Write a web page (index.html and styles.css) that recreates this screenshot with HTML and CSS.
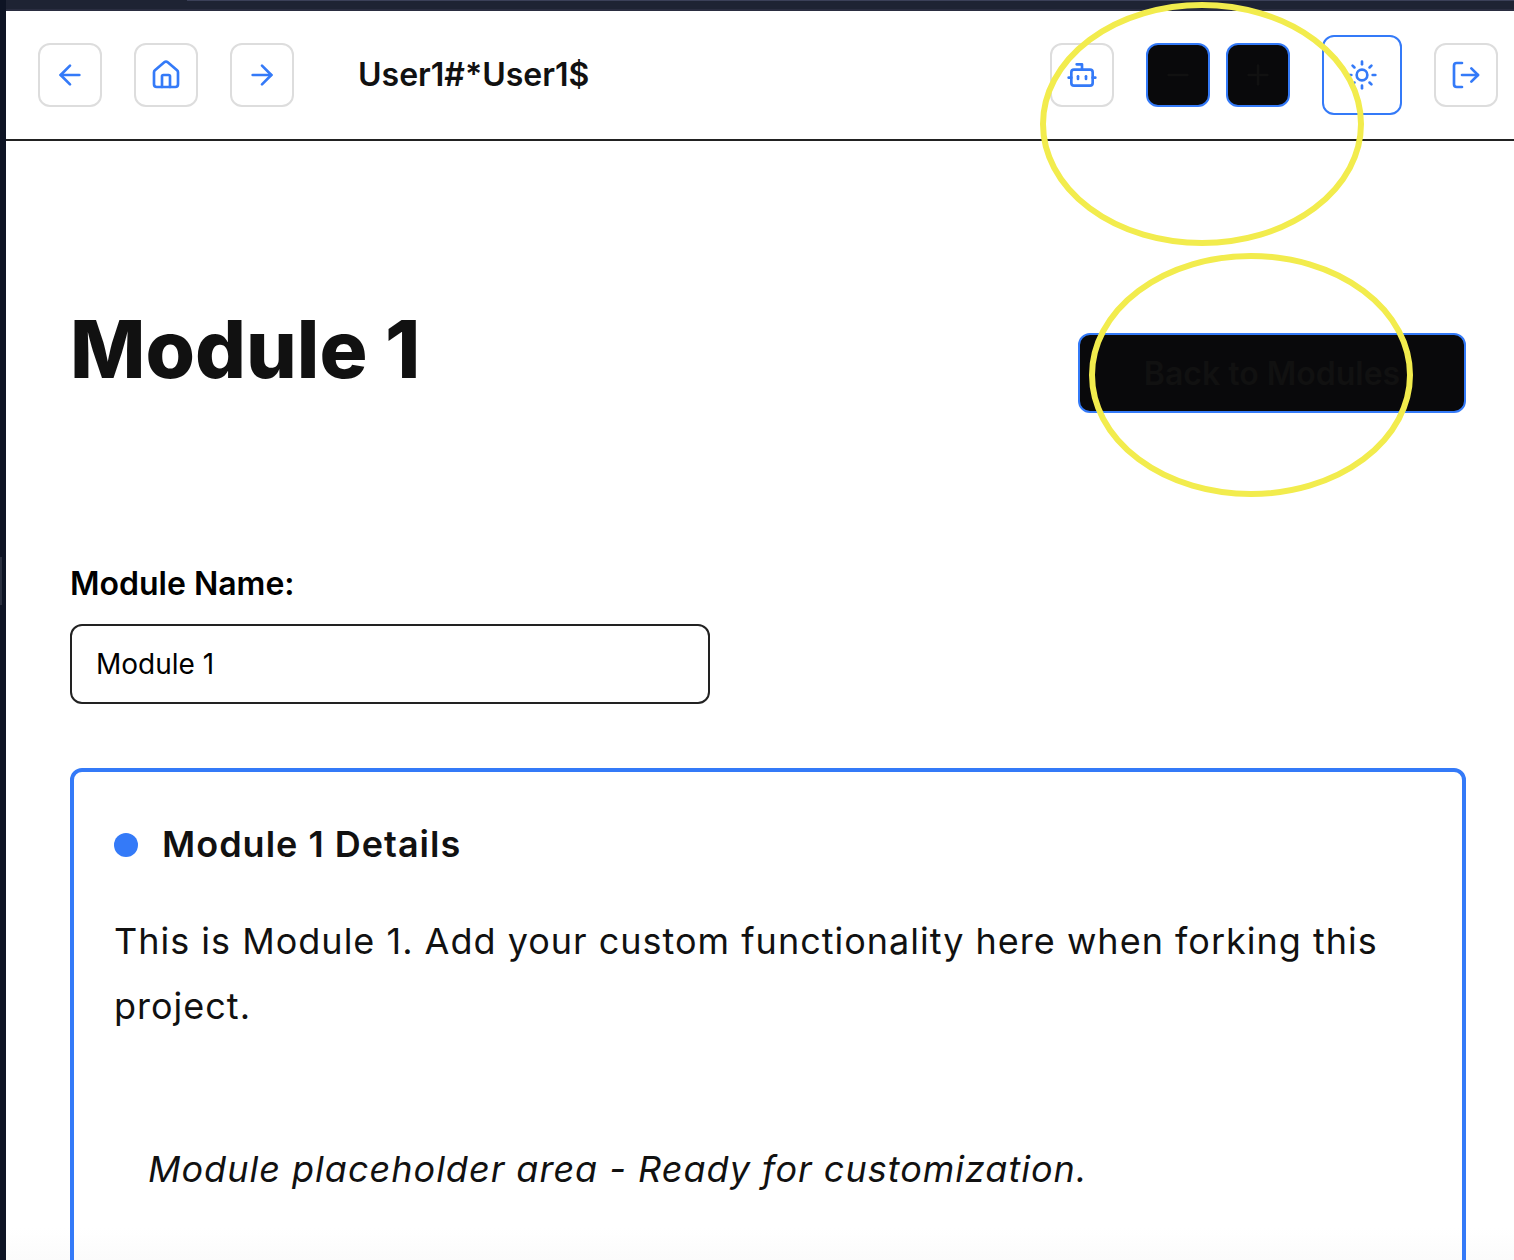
FILE: index.html
```html
<!DOCTYPE html>
<html lang="en">
<head>
<meta charset="utf-8">
<meta name="viewport" content="width=device-width, initial-scale=1">
<title>Module 1</title>
<link rel="stylesheet" href="styles.css">
</head>
<body>
<div class="desktop">
  <div class="side-strip"><span class="side-handle"></span></div>
  <div class="window">
    <div class="top-strip"><span class="tab-line"></span></div>
    <header class="header">
      <nav class="nav" aria-label="Main">
        <button class="icon-button" type="button" aria-label="Back">
          <svg class="icon" viewBox="0 0 24 24"><path d="m12 19-7-7 7-7"/><path d="M19 12H5"/></svg>
        </button>
        <button class="icon-button" type="button" aria-label="Home">
          <svg class="icon" viewBox="0 0 24 24"><path d="M15 21v-8a1 1 0 0 0-1-1h-4a1 1 0 0 0-1 1v8"/><path d="M3 10a2 2 0 0 1 .709-1.528l7-5.999a2 2 0 0 1 2.582 0l7 5.999A2 2 0 0 1 21 10v9a2 2 0 0 1-2 2H5a2 2 0 0 1-2-2z"/></svg>
        </button>
        <button class="icon-button" type="button" aria-label="Forward">
          <svg class="icon" viewBox="0 0 24 24"><path d="M5 12h14"/><path d="m12 5 7 7-7 7"/></svg>
        </button>
      </nav>
      <span class="user-name">User1#*User1$</span>
      <div class="tools">
        <button class="icon-button" type="button" aria-label="Assistant">
          <svg class="icon" viewBox="0 0 24 24"><path d="M12 8V4H8"/><rect width="16" height="12" x="4" y="8" rx="2"/><path d="M2 14h2"/><path d="M20 14h2"/><path d="M15 13v2"/><path d="M9 13v2"/></svg>
        </button>
        <div class="zoom-group">
          <button class="icon-button icon-button-dark" type="button" aria-label="Decrease text size">
            <svg class="icon" viewBox="0 0 24 24"><path d="M5 12h14"/></svg>
          </button>
          <button class="icon-button icon-button-dark" type="button" aria-label="Increase text size">
            <svg class="icon" viewBox="0 0 24 24"><path d="M5 12h14"/><path d="M12 5v14"/></svg>
          </button>
        </div>
        <button class="icon-button icon-button-large" type="button" aria-label="Toggle theme">
          <svg class="icon" viewBox="0 0 24 24"><circle cx="12" cy="12" r="4"/><path d="M12 2v2"/><path d="M12 20v2"/><path d="m4.93 4.93 1.41 1.41"/><path d="m17.66 17.66 1.41 1.41"/><path d="M2 12h2"/><path d="M20 12h2"/><path d="m6.34 17.66-1.41 1.41"/><path d="m19.07 4.93-1.41 1.41"/></svg>
        </button>
        <button class="icon-button" type="button" aria-label="Log out">
          <svg class="icon" viewBox="0 0 24 24"><path d="M9 21H5a2 2 0 0 1-2-2V5a2 2 0 0 1 2-2h4"/><path d="m16 17 5-5-5-5"/><path d="M21 12H9"/></svg>
        </button>
      </div>
    </header>
    <main class="main">
      <div class="title-row">
        <h1 class="title">Module 1</h1>
        <button class="back-button" type="button">Back to Modules</button>
      </div>
      <div class="field">
        <label class="field-label" for="module-name">Module Name:</label>
        <input class="field-input" id="module-name" type="text" value="Module 1">
      </div>
      <section class="card">
        <h2 class="card-title"><span class="dot"></span>Module 1 Details</h2>
        <p class="card-text">This is Module 1. Add your custom functionality here when forking this project.</p>
        <p class="placeholder">Module placeholder area - Ready for customization.</p>
      </section>
    </main>
  </div>
  <svg class="ring ring-tools" viewBox="0 0 324 244" aria-hidden="true"><ellipse cx="162" cy="122" rx="159" ry="119"/></svg>
  <svg class="ring ring-back" viewBox="0 0 324 244" aria-hidden="true"><ellipse cx="162" cy="122" rx="159" ry="119"/></svg>
</div>
</body>
</html>
```
FILE: styles.css
```css
* {
  box-sizing: border-box;
}

body {
  margin: 0;
  background: #fff;
  color: #111;
  font-family: Inter, "Liberation Sans", sans-serif;
}

h1, h2, p {
  margin: 0;
}

button, input {
  font: inherit;
}

.desktop {
  position: relative;
  display: flex;
  height: 100vh;
  overflow: hidden;
}

.side-strip {
  display: flex;
  align-items: flex-start;
  flex: 0 0 6px;
  padding-top: 557px;
  background: #0e1424;
}

.side-handle {
  width: 2px;
  height: 48px;
  background: #2b303f;
}

.window {
  flex: 1;
  min-width: 0;
  background: linear-gradient(to top, #fbfbfb, #fff 32px);
}

.top-strip {
  height: 11px;
  padding-left: 181px;
  border-bottom: 2px solid #2a2d40;
  background: #1e2333;
}

.tab-line {
  display: block;
  height: 1px;
  background: #3b4058;
}

.header {
  display: flex;
  align-items: center;
  height: 130px;
  padding: 0 16px 0 32px;
  border-bottom: 2px solid #222;
}

.nav, .tools {
  display: flex;
  align-items: center;
  gap: 32px;
}

.tools {
  margin-left: auto;
}

.zoom-group {
  display: flex;
  gap: 16px;
}

.icon-button {
  display: flex;
  align-items: center;
  justify-content: center;
  width: 64px;
  height: 64px;
  padding: 0;
  border: 2px solid #ddd;
  border-radius: 12px;
  background: #fff;
  color: #347af8;
}

.icon-button-dark {
  border-color: #347af8;
  background: #09090b;
  color: #111;
}

.icon-button-large {
  width: 80px;
  height: 80px;
  border-color: #347af8;
}

.icon {
  width: 32px;
  height: 32px;
  fill: none;
  stroke: currentColor;
  stroke-width: 2;
  stroke-linecap: round;
  stroke-linejoin: round;
}

.user-name {
  margin-left: 64px;
  font-size: 32px;
  font-weight: 600;
  line-height: 48px;
}

.main {
  padding: 160px 48px 0 64px;
}

.title-row {
  display: flex;
  align-items: center;
  justify-content: space-between;
  margin-bottom: 115px;
}

.title {
  padding-bottom: 48px;
  font-size: 80px;
  font-weight: 800;
  line-height: 96px;
}

.back-button {
  width: 388px;
  height: 80px;
  padding: 0;
  border: 2px solid #347af8;
  border-radius: 12px;
  background: #09090b;
  color: #111;
  font-size: 32px;
  font-weight: 600;
}

.field {
  display: flex;
  flex-direction: column;
  align-items: flex-start;
  gap: 16px;
  margin-bottom: 64px;
}

.field-label {
  color: #000;
  font-size: 32px;
  font-weight: 600;
  line-height: 48px;
}

.field-input {
  width: 640px;
  max-width: 100%;
  height: 80px;
  padding: 0 24px;
  border: 2px solid #222;
  border-radius: 12px;
  background: #fff;
  color: #000;
  font-size: 28px;
}

/* The card's copy is set with open tracking */
.card {
  padding: 40px 40px 120px;
  border: 4px solid #347af8;
  border-radius: 12px;
  font-size: 36px;
  letter-spacing: 1px;
  line-height: 65px;
}

.card-title {
  display: flex;
  align-items: center;
  gap: 24px;
  margin-bottom: 32px;
  font-size: 36px;
  font-weight: 600;
}

.dot {
  width: 24px;
  height: 24px;
  border-radius: 50%;
  background: #347af8;
}

.placeholder {
  margin-top: 64px;
  padding: 34px;
  font-style: oblique 14deg;
}

/* Highlight rings laid over the page */
.ring {
  position: absolute;
  width: 324px;
  height: 244px;
  fill: none;
  stroke: #f2ec4d;
  stroke-width: 6;
  pointer-events: none;
}

.ring-tools {
  top: 2px;
  right: 150px;
}

.ring-back {
  top: 253px;
  right: 101px;
}
```
